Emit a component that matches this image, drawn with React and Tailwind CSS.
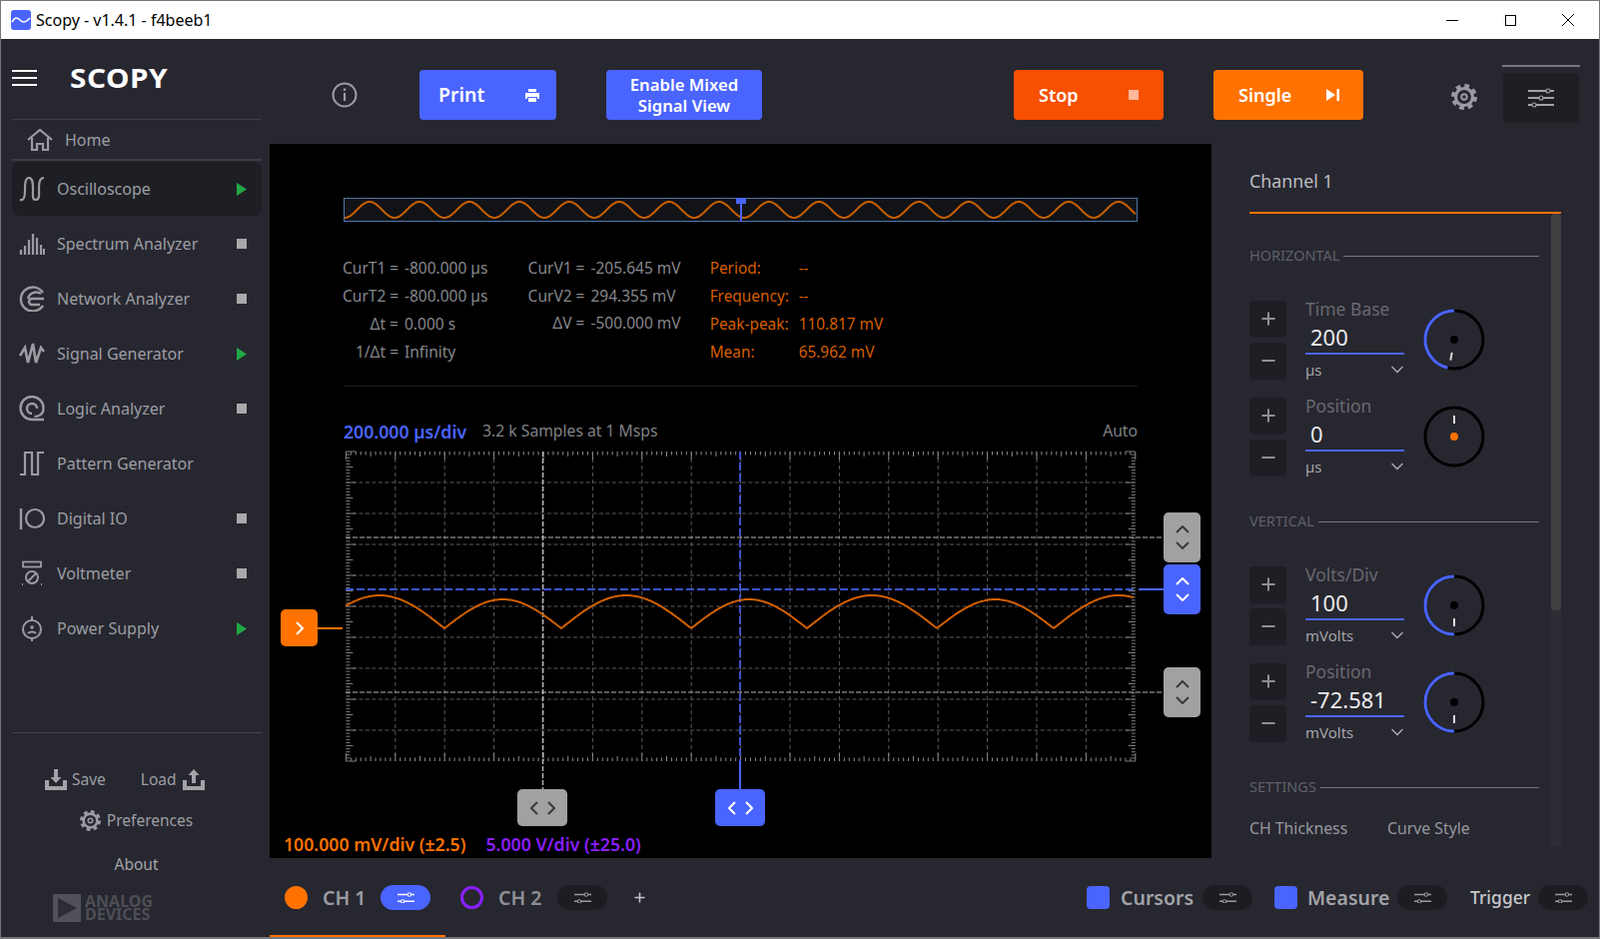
import React from "react";
import { ChevronDown, Plus, Minus } from "lucide-react";

const range = (n) => Array.from({ length: n }, (_, i) => i);

const Hamburger = () => (
  <svg width="26" height="18" viewBox="0 0 26 18" fill="none" stroke="#fff" strokeWidth="2.2">
    <path d="M0 2h25M0 9h25M0 16h25" />
  </svg>
);

const Ic = ({ children, w = 26, h = 26 }) => (
  <svg width={w} height={h} viewBox="0 0 26 26" fill="none" stroke="#9b9ca1" strokeWidth="2" className="shrink-0">
    {children}
  </svg>
);

const sideIcons = {
  osc: <Ic><path strokeWidth="2.200" d="M1 24c4 1 5-3 5-9s0-13 4-13 4 6 4 12 -1 10 3 10 3-6 3-12 1-10 5-10" /></Ic>,
  spectrum: (
    <Ic>
      <path strokeWidth="2.200" d="M2 24v-5M6 24v-9M10 24V9M14 24V3M18 24V7M22 24V14M25 24v-6" />
    </Ic>
  ),
  network: (
    <Ic>
      <path strokeWidth="2.400" d="M24 7A12 12 0 1 0 24 20" />
      <path strokeWidth="2.400" d="M25 13H13a3 3 0 0 0 0 6h8M22 8a8.500 8.500 0 0 0-13 5" />
    </Ic>
  ),
  signal: <Ic><path strokeWidth="2.600" d="M1 15l5-8 3 15 5-19 3 19 5-15 3 4" /></Ic>,
  logic: (
    <Ic>
      <path strokeWidth="2.400" d="M25 24H13A11.500 11.500 0 1 1 24.500 13c0 5-4 8-9 8" />
      <path strokeWidth="2.400" d="M13 18a5 5 0 1 1 5-5" />
    </Ic>
  ),
  pattern: <Ic><path strokeWidth="2.200" d="M1 24h5V2h7v22h6V2h6" /></Ic>,
  digital: (
    <Ic>
      <path strokeWidth="2.400" d="M2 3v21" />
      <circle cx="16" cy="13" r="9" strokeWidth="2.200" />
    </Ic>
  ),
  volt: (
    <Ic>
      <rect x="4" y="1.500" width="18" height="5" strokeWidth="1.800" />
      <circle cx="13" cy="17" r="6" strokeWidth="2" />
      <path strokeWidth="1.800" d="M9 21l8-8M3 24h1M22 24h1" />
    </Ic>
  ),
  power: (
    <Ic>
      <circle cx="13" cy="14" r="9" strokeWidth="2" />
      <path strokeWidth="2" d="M13 1v4M13 23v3M9 18c2-2 6-2 8 0" />
      <circle cx="13" cy="12" r="1.800" fill="#9b9ca1" stroke="none" />
    </Ic>
  ),
};

const tools = [
  { name: "Oscilloscope", icon: "osc", status: "run", active: true },
  { name: "Spectrum Analyzer", icon: "spectrum", status: "stop" },
  { name: "Network Analyzer", icon: "network", status: "stop" },
  { name: "Signal Generator", icon: "signal", status: "run" },
  { name: "Logic Analyzer", icon: "logic", status: "stop" },
  { name: "Pattern Generator", icon: "pattern" },
  { name: "Digital IO", icon: "digital", status: "stop" },
  { name: "Voltmeter", icon: "volt", status: "stop" },
  { name: "Power Supply", icon: "power", status: "run" },
];

const Status = ({ kind }) => {
  if (kind === "run") {
    return (
      <svg width="10" height="13" viewBox="0 0 10 13" className="ml-auto">
        <path d="M0 0l10 6.500L0 13z" fill="#22a845" />
      </svg>
    );
  }
  if (kind === "stop") return <div className="ml-auto w-[10px] h-[10px] bg-[#a9a9ab]" />;
  return null;
};

const ToolRow = ({ name, icon, status, active }) => (
  <div className="h-[55px]">
    <div className={`h-[54px] flex items-center pl-[7px] pr-[15px] gap-3 rounded-lg ${active ? "bg-[#1e1f25]" : ""}`}>
      {sideIcons[icon]}
      <span className="text-[16px] text-[#9c9ea3]">{name}</span>
      <Status kind={status} />
    </div>
  </div>
);

const Gear = ({ size = 22, color = "#9b9ca1" }) => (
  <svg width={size} height={size} viewBox="0 0 26 26" fill="none" stroke={color}>
    <circle cx="13" cy="13" r="8.500" strokeWidth="3.200" />
    <circle cx="13" cy="13" r="11" strokeWidth="4" strokeDasharray="4.640 4" />
    <circle cx="13" cy="13" r="2.800" strokeWidth="2" />
  </svg>
);

const Tray = ({ up }) => (
  <svg width="22" height="21" viewBox="0 0 22 21" fill="#a3a4a8">
    <path d="M0 11h4v6h14v-6h4v10H0z" />
    {up ? <path d="M11 0l5.500 6H13v8H9V6H5.500z" /> : <path d="M9 0h4v8h3.500L11 14 5.500 8H9z" />}
  </svg>
);

const Sidebar = () => (
  <aside className="w-[269px] shrink-0 bg-[#272730] pl-[11px] pr-[8px] flex flex-col">
    <div className="h-[81px] shrink-0 flex items-center border-b border-[#3d3e45] pb-[3px]">
      <Hamburger />
      <span className="ml-[32px] text-[27px] leading-none font-bold text-white tracking-[0.5px] font-['Inter',sans-serif] scale-x-110 origin-left">
        SCOPY
      </span>
    </div>
    <div className="h-[41px] shrink-0 flex items-center border-b-2 border-[#3d3e45] pl-[15px] gap-[12px]">
      <svg width="26" height="22" viewBox="0 0 26 22" fill="none" stroke="#9b9ca1" strokeWidth="2.200">
        <path d="M1 11L13 1l12 10M5 9v12h5v-6h6v6h5V9" />
      </svg>
      <span className="text-[16px] text-[#9c9ea3]">Home</span>
    </div>
    <div className="mt-[1px]">
      {tools.map((t) => (
        <ToolRow key={t.name} {...t} />
      ))}
    </div>
    <div className="mt-auto">
      <div className="border-t border-[#45464c]" />
      <div className="mt-[35px] flex items-center text-[15.500px] text-[#9c9ea3] pl-[33px]">
        <Tray />
        <span className="ml-[5px]">Save</span>
        <span className="ml-[35px]">Load</span>
        <span className="ml-[6px]"><Tray up /></span>
      </div>
      <div className="mt-[17px] flex items-center justify-center gap-[6px] text-[15.500px] text-[#9c9ea3] pr-[1px]">
        <Gear size={21} />
        <span>Preferences</span>
      </div>
      <div className="mt-[21px] text-center text-[15.500px] text-[#a5a6aa] pr-[1px]">About</div>
      <div className="mt-[18px] mb-[15px] ml-[41px] flex items-center gap-[4px]">
        <svg width="28" height="28" viewBox="0 0 28 28">
          <path d="M0 0h28v28H0z" fill="#50515a" />
          <path d="M5 4l19 10L5 24z" fill="#2c2d35" />
        </svg>
        <div className="text-[16px] leading-[13px] font-bold text-[#4d4e55] font-['Liberation_Sans',sans-serif]">
          ANALOG
          <br />
          DEVICES
        </div>
      </div>
    </div>
  </aside>
);

const Sliders = ({ color = "#9b9ca1", width = 20 }) => (
  <svg width={width} height={width * 0.7} viewBox="0 0 20 14" fill="none" stroke={color} strokeWidth="1.800">
    <path d="M0 3h12M16 3h4M0 11h4M8 11h12" />
    <circle cx="14" cy="3" r="2" strokeWidth="1.200" />
    <circle cx="6" cy="11" r="2" strokeWidth="1.200" />
  </svg>
);

const ToolButton = ({ label, bg, width, className = "", children, pl = "pl-[25px]", text = "text-[18px]" }) => (
  <div className={`h-[50px] rounded-[4px] flex items-center justify-between font-semibold text-white ${text} ${pl} ${bg} ${width} ${className}`}>
    <span>{label}</span>
    {children}
  </div>
);

const Toolbar = () => (
  <div className="h-[105px] shrink-0 bg-[#272730] flex items-start pt-[31px] pl-[62px]">
    <svg width="26" height="26" viewBox="0 0 26 26" fill="none" stroke="#9b9ca1" strokeWidth="2" className="mt-[12px]">
      <circle cx="13" cy="13" r="11.500" />
      <path strokeWidth="2.200" d="M13 11v8" />
      <path strokeWidth="2.400" d="M13 6.500v2.400" />
    </svg>
    <ToolButton label="Print" bg="bg-[#4a64ff]" width="w-[137px]" className="ml-[62px] pr-[17px]" pl="pl-[19px]" text="text-[19.500px]">
      <svg width="14" height="13" viewBox="0 0 14 13" fill="#fff">
        <path d="M3 0h8v3H3zM0 4h14v6h-2V8H2v2H0zM3 9h8v4H3z" />
      </svg>
    </ToolButton>
    <div className="ml-[50px] w-[156px] h-[50px] rounded-[4px] bg-[#4a64ff] flex items-center justify-center text-center text-white font-semibold text-[16.700px] leading-[21px]">
      Enable Mixed
      <br />
      Signal View
    </div>
    <ToolButton label="Stop" bg="bg-[#f75000]" width="w-[150px]" className="ml-[252px] pr-[25px]">
      <div className="w-[10px] h-[10px] bg-[#ffb89a]" />
    </ToolButton>
    <ToolButton label="Single" bg="bg-[#ff7200]" width="w-[150px]" className="ml-[50px] pr-[24px]">
      <svg width="13" height="12" viewBox="0 0 13 12" fill="#fff">
        <path d="M0 0l9 6-9 6zM10.500 0H13v12h-2.500z" />
      </svg>
    </ToolButton>
    <span className="ml-[88px] mt-[14px]">
      <Gear size={26} />
    </span>
    <div className="ml-[25px] -mt-[5px] w-[78px] border-t-2 border-[#77787c]">
      <div className="mt-[6px] mx-[1px] h-[50px] rounded-[4px] bg-[#1e1f23] flex items-center justify-center">
        <svg width="26" height="20" viewBox="0 0 26 20" fill="none" stroke="#a2a3a6" strokeWidth="2">
          <path d="M0 3h18M22 3h4M0 10h11M15 10h11M0 17h4M8 17h18" />
          <circle cx="20" cy="3" r="2" strokeWidth="1.200" />
          <circle cx="13" cy="10" r="2" strokeWidth="1.200" />
          <circle cx="6" cy="17" r="2" strokeWidth="1.200" />
        </svg>
      </div>
    </div>
  </div>
);

const Overview = () => {
  let d = "";
  for (let x = 345; x <= 1138; x += 2) {
    d += `${d ? "L" : "M"}${x} ${210 - 8 * Math.cos(((x - 370) / 50) * 2 * Math.PI)}`;
  }
  return (
    <svg width="795" height="24" viewBox="344 198 795 24" className="block ml-[74px]">
      <rect x="344.500" y="198.500" width="794" height="23" fill="#121317" stroke="#4f75a8" />
      <path d={d} fill="none" stroke="#c85f00" strokeWidth="2" />
      <path d="M742 198v24" stroke="#4a64ff" strokeWidth="2" />
      <rect x="737" y="198" width="10" height="6" fill="#4a64ff" />
    </svg>
  );
};

const MeasureCol = ({ rows, grid, className = "", text }) => (
  <div className={`grid ${grid} ${className} ${text} text-[15.500px] leading-[27.500px]`}>
    {rows.map(([k, v]) => (
      <React.Fragment key={k}>
        <span className="text-right whitespace-nowrap">{k}</span>
        <span className="whitespace-nowrap">{v}</span>
      </React.Fragment>
    ))}
  </div>
);

const X0 = 346.4;
const DX = 49.4;
const Y0 = 452;
const DY = 31;
const X1 = X0 + 16 * DX;
const Y1 = Y0 + 10 * DY;

const tracePath = () => {
  const v = [315, 445, 562, 692, 808, 938, 1055, 1185];
  const pk = [33, 29, 33, 29, 33, 29, 33];
  let d = "";
  for (let x = 346; x <= 1136; x += 1.5) {
    const i = v.findIndex((a, n) => x >= a && x < v[n + 1]);
    const y = 629 - pk[i] * Math.sin((Math.PI * (x - v[i])) / (v[i + 1] - v[i]));
    d += `${d ? "L" : "M"}${x} ${y.toFixed(1)}`;
  }
  return d;
};

const Plot = () => (
  <svg width="943" height="344" viewBox="270 446 943 344" className="block mt-[4px]" fill="none">
    {range(15).map((i) => (
      <path key={i} d={`M${X0 + (i + 1) * DX} ${Y0}V${Y1}`} stroke="#5a5a5a" strokeDasharray="4 3" />
    ))}
    {range(9).map((i) => (
      <path key={i} d={`M${X0} ${Y0 + (i + 1) * DY}H${X1}`} stroke="#5a5a5a" strokeDasharray="4 2.500" />
    ))}
    {range(161).map((i) => {
      const x = X0 + (i * DX) / 10;
      const len = i % 10 === 0 ? 8 : i % 5 === 0 ? 5 : 3.500;
      return (
        <path key={i} d={`M${x} ${Y0}v${len}M${x} ${Y1}v${-len}`} stroke="#8c8c8c" />
      );
    })}
    {range(101).map((i) => {
      const y = Y0 + (i * DY) / 10;
      const len = i % 10 === 0 ? 10 : i % 5 === 0 ? 7 : 4;
      return (
        <path key={i} d={`M${X0} ${y}h${len}M${X1} ${y}h${-len}`} stroke="#7d7d7d" />
      );
    })}
    {/* cursors */}
    <path d="M346 538H1165M346 693H1165" stroke="#b4b4b4" strokeDasharray="5 2" />
    <path d="M543.500 452V790" stroke="#b4b4b4" strokeWidth="1.500" strokeDasharray="5 2" />
    <path d="M741 452V762" stroke="#3e52c8" strokeWidth="2" strokeDasharray="8 3" />
    <path d="M741 762V790" stroke="#4a64ff" strokeWidth="2" />
    <path d="M346 590H1137" stroke="#3e52c8" strokeWidth="2" strokeDasharray="8 3" />
    <path d="M1140 590H1165" stroke="#4a64ff" strokeWidth="2" />
    <path d="M318 629H343" stroke="#ff7200" strokeWidth="2" />
    <path d={tracePath()} stroke="#d06000" strokeWidth="2" />
  </svg>
);

const Chev = ({ dir, color, className = "" }) => (
  <svg width="14" height="8" viewBox="0 0 14 8" fill="none" stroke={color} strokeWidth="2" className={className}>
    <path d={dir === "up" ? "M1 7l6-6 6 6" : "M1 1l6 6 6-6"} />
  </svg>
);

const VHandle = ({ className, bg, color }) => (
  <div className={`absolute left-[895px] w-[37px] h-[50px] rounded-[5px] flex flex-col items-center justify-center gap-[8px] ${bg} ${className}`}>
    <Chev dir="up" color={color} />
    <Chev dir="down" color={color} />
  </div>
);

const HHandle = ({ className, bg, color }) => (
  <div className={`absolute top-[646px] w-[50px] h-[37px] rounded-[5px] flex items-center justify-center gap-[9px] ${bg} ${className}`}>
    <svg width="8" height="14" viewBox="0 0 8 14" fill="none" stroke={color} strokeWidth="2"><path d="M7 1L1 7l6 6" /></svg>
    <svg width="8" height="14" viewBox="0 0 8 14" fill="none" stroke={color} strokeWidth="2"><path d="M1 1l6 6-6 6" /></svg>
  </div>
);

const PlotArea = () => (
  <div className="relative w-[943px] shrink-0 bg-black pt-[54px]">
    <Overview />
    <div className="mt-[33px] flex">
      <MeasureCol
        className="ml-[73px]"
        grid="grid-cols-[56px_auto] gap-x-[6px]"
        text="text-[#85878c]"
        rows={[
          ["CurT1 =", "-800.000 µs"],
          ["CurT2 =", "-800.000 µs"],
          ["Δt =", "0.000 s"],
          ["1/Δt =", "Infinity"],
        ]}
      />
      <MeasureCol
        className="ml-[39px] h-fit"
        grid="grid-cols-[58px_auto] gap-x-[6px]"
        text="text-[#85878c]"
        rows={[
          ["CurV1 =", "-205.645 mV"],
          ["CurV2 =", "294.355 mV"],
          ["ΔV =", "-500.000 mV"],
        ]}
      />
      <div className="ml-[29px] grid grid-cols-[89px_auto] text-[15.400px] leading-[28px] text-[#d65f00]">
        <span>Period:</span>
        <span>--</span>
        <span>Frequency:</span>
        <span>--</span>
        <span>Peak-peak:</span>
        <span>110.817 mV</span>
        <span>Mean:</span>
        <span>65.962 mV</span>
      </div>
    </div>
    <div className="mt-[19px] ml-[74px] w-[795px] border-t border-[#1d1d1d]" />
    <div className="mt-[35px] ml-[74px] w-[795px] h-[20px] flex items-center text-[15.700px] text-[#7f8186]">
      <span className="text-[#4a64ff] font-semibold text-[17.700px]">200.000 µs/div</span>
      <span className="ml-[16px]">3.2 k Samples at 1 Msps</span>
      <span className="ml-auto">Auto</span>
    </div>
    <Plot />
    <div className="mt-[45px] ml-[14px] h-[20px] flex items-center gap-[20px] font-semibold text-[17.700px]">
      <span className="text-[#ff7200]">100.000 mV/div (±2.5)</span>
      <span className="text-[#8a1fff]">5.000 V/div (±25.0)</span>
    </div>

    <div className="absolute left-[11px] top-[466px] w-[37px] h-[37px] rounded-[5px] bg-[#ff7200] flex items-center justify-center">
      <svg width="8" height="14" viewBox="0 0 8 14" fill="none" stroke="#fff" strokeWidth="2"><path d="M1 1l6 6-6 6" /></svg>
    </div>
    <VHandle className="top-[369px]" bg="bg-[#a1a1a1]" color="#3a3a3a" />
    <VHandle className="top-[421px]" bg="bg-[#4a64ff]" color="#ffffff" />
    <VHandle className="top-[524px]" bg="bg-[#a1a1a1]" color="#3a3a3a" />
    <HHandle className="left-[248px]" bg="bg-[#a1a1a1]" color="#3a3a3a" />
    <HHandle className="left-[446px]" bg="bg-[#4a64ff]" color="#ffffff" />
  </div>
);

const polar = (r, deg) => {
  const a = (deg * Math.PI) / 180;
  return [31 + r * Math.sin(a), 31 - r * Math.cos(a)];
};

// arc runs counter clockwise from the top, tick angle counted clockwise from the top
const Knob = ({ arc = 0, tick, dot = "#000" }) => {
  const end = polar(29, -arc);
  const t1 = polar(13, tick);
  const t2 = polar(21, tick);
  return (
    <svg width="62" height="62" viewBox="0 0 62 62" fill="none" className="shrink-0">
      <circle cx="31" cy="31" r="29" stroke="#000" strokeWidth="3" />
      {arc > 0 && <path d={`M31 2A29 29 0 0 0 ${end[0]} ${end[1]}`} stroke="#4a64ff" strokeWidth="3" />}
      <circle cx="31" cy="31" r="4" fill={dot} />
      <path d={`M${t1[0]} ${t1[1]}L${t2[0]} ${t2[1]}`} stroke="#dcdcdc" strokeWidth="2" />
    </svg>
  );
};

const StepBtn = ({ children }) => (
  <div className="w-[37px] h-[37px] rounded-[4px] bg-[#1e1f24] flex items-center justify-center text-[#8f9094]">{children}</div>
);

const Param = ({ label, value, unit, knob, className = "" }) => (
  <div className={`flex items-center h-[80px] ${className}`}>
    <div className="flex flex-col gap-[5px]">
      <StepBtn><Plus size={20} strokeWidth={2.400} /></StepBtn>
      <StepBtn><Minus size={20} strokeWidth={2.400} /></StepBtn>
    </div>
    <div className="ml-[19px] w-[99px] flex flex-col">
      <div className="h-[19px] leading-[18px] text-[17.500px] text-[#67686e]">{label}</div>
      <div className="h-[36px] pt-[5px] pl-[5px] leading-[26px] border-b-2 border-[#4a64ff] text-[22px] text-[#ebebeb]">{value}</div>
      <div className="h-[25px] pt-[5px] flex items-center justify-between text-[15px] text-[#a3a4a8]">
        <span>{unit}</span>
        <ChevronDown size={20} strokeWidth={2} className="-mr-[3px]" />
      </div>
    </div>
    <div className="ml-[19px]">
      <Knob {...knob} />
    </div>
  </div>
);

const SectionTitle = ({ children, className = "" }) => (
  <div className={`h-[20px] flex items-center gap-[4px] text-[14.500px] text-[#5f6066] ${className}`}>
    <span>{children}</span>
    <div className="flex-1 h-px bg-[#77787c]" />
  </div>
);

const Panel = () => (
  <div className="flex-1 bg-[#272730] pl-[38px] pr-[38px] flex flex-col">
    <div className="h-[70px] shrink-0 border-b-2 border-[#ff7200] pt-[25px] text-[17.800px] leading-[24px] text-[#bcbdc0]">Channel 1</div>
    <div className="flex flex-1 min-h-0">
      <div className="flex-1 pr-[12px]">
        <SectionTitle className="mt-[32px]">HORIZONTAL</SectionTitle>
        <Param className="mt-[34px]" label="Time Base" value="200" unit="µs" knob={{ arc: 167, tick: 190 }} />
        <Param className="mt-[17px]" label="Position" value="0" unit="µs" knob={{ tick: 0, dot: "#ff7200" }} />
        <SectionTitle className="mt-[35px]">VERTICAL</SectionTitle>
        <Param className="mt-[34px]" label="Volts/Div" value="100" unit="mVolts" knob={{ arc: 180, tick: 180 }} />
        <Param className="mt-[17px]" label="Position" value="-72.581" unit="mVolts" knob={{ arc: 180, tick: 180 }} />
        <SectionTitle className="mt-[35px]">SETTINGS</SectionTitle>
        <div className="mt-[21px] flex text-[15.800px] text-[#96979b] leading-[20px]">
          <span className="w-[138px]">CH Thickness</span>
          <span>Curve Style</span>
        </div>
      </div>
      <div className="w-[10px] h-[634px] bg-[#2d2e35] rounded-t-[4px]">
        <div className="h-[397px] bg-[#414144] rounded-[4px]" />
      </div>
    </div>
  </div>
);

const Pill = ({ active, className = "" }) => (
  <div className={`w-[50px] h-[25px] shrink-0 rounded-full flex items-center justify-center ${active ? "bg-[#4a64ff]" : "bg-[#1c1d21]"} ${className}`}>
    <Sliders color={active ? "#ffffff" : "#9b9ca1"} width={17} />
  </div>
);

const BottomBar = () => (
  <div className="h-[79px] shrink-0 bg-[#272730] flex items-stretch">
    <div className="w-[176px] border-b-2 border-[#ff7200] pt-[2px] flex items-center pl-[15px]">
      <div className="w-[23px] h-[23px] rounded-full bg-[#ff7200]" />
      <span className="ml-[15px] w-[58px] font-semibold text-[19.500px] text-[#9a9ca1]">CH 1</span>
      <Pill active />
    </div>
    <div className="flex items-center flex-1">
      <div className="ml-[15px] w-[23px] h-[23px] rounded-full border-[3px] border-[#8a1fff]" />
      <span className="ml-[15px] w-[59px] font-semibold text-[19.500px] text-[#8e9095]">CH 2</span>
      <Pill />
      <Plus size={15} strokeWidth={2.400} className="ml-[25px] text-[#c4c5c8]" />
      <div className="ml-[440px] w-[23px] h-[23px] rounded-[4px] bg-[#4a64ff]" />
      <span className="ml-[11px] w-[82px] font-semibold text-[19.500px] text-[#a1a3a7]">Cursors</span>
      <Pill />
      <div className="ml-[22px] w-[23px] h-[23px] rounded-[4px] bg-[#4a64ff]" />
      <span className="ml-[10px] w-[90px] font-semibold text-[19.500px] text-[#a1a3a7]">Measure</span>
      <Pill />
      <span className="ml-[23px] w-[68px] text-[17.500px] text-[#c5c7cb] font-medium">Trigger</span>
      <Pill />
    </div>
  </div>
);

export default function App() {
  return (
    <div className="w-[1602px] h-[940px] flex flex-col overflow-hidden border-x border-t border-b-2 border-[#75767a] bg-white font-['Open_Sans',sans-serif]">
      <div className="h-[38px] shrink-0 bg-white flex items-center pl-[10px]">
        <svg width="20" height="20" viewBox="0 0 20 20" className="shrink-0">
          <rect width="20" height="20" rx="3" fill="#4a64ff" />
          <path d="M1 12c3-5 5-5 8-2s5 3 10-2" fill="none" stroke="#fff" strokeWidth="1.600" />
        </svg>
        <span className="ml-[5px] text-[16px] text-black">Scopy - v1.4.1 - f4beeb1</span>
        <div className="ml-auto flex items-center">
          <div className="w-[12px] h-px bg-black" />
          <div className="ml-[47px] w-[11px] h-[11px] border border-black" />
          <svg width="12" height="12" viewBox="0 0 12 12" stroke="#000" className="ml-[46px] mr-[25px]">
            <path d="M0 0l12 12M12 0L0 12" />
          </svg>
        </div>
      </div>
      <div className="flex flex-1 min-h-0">
        <Sidebar />
        <div className="flex-1 min-w-0 flex flex-col">
          <Toolbar />
          <div className="flex-1 min-h-0 flex">
            <PlotArea />
            <Panel />
          </div>
          <BottomBar />
        </div>
      </div>
    </div>
  );
}
